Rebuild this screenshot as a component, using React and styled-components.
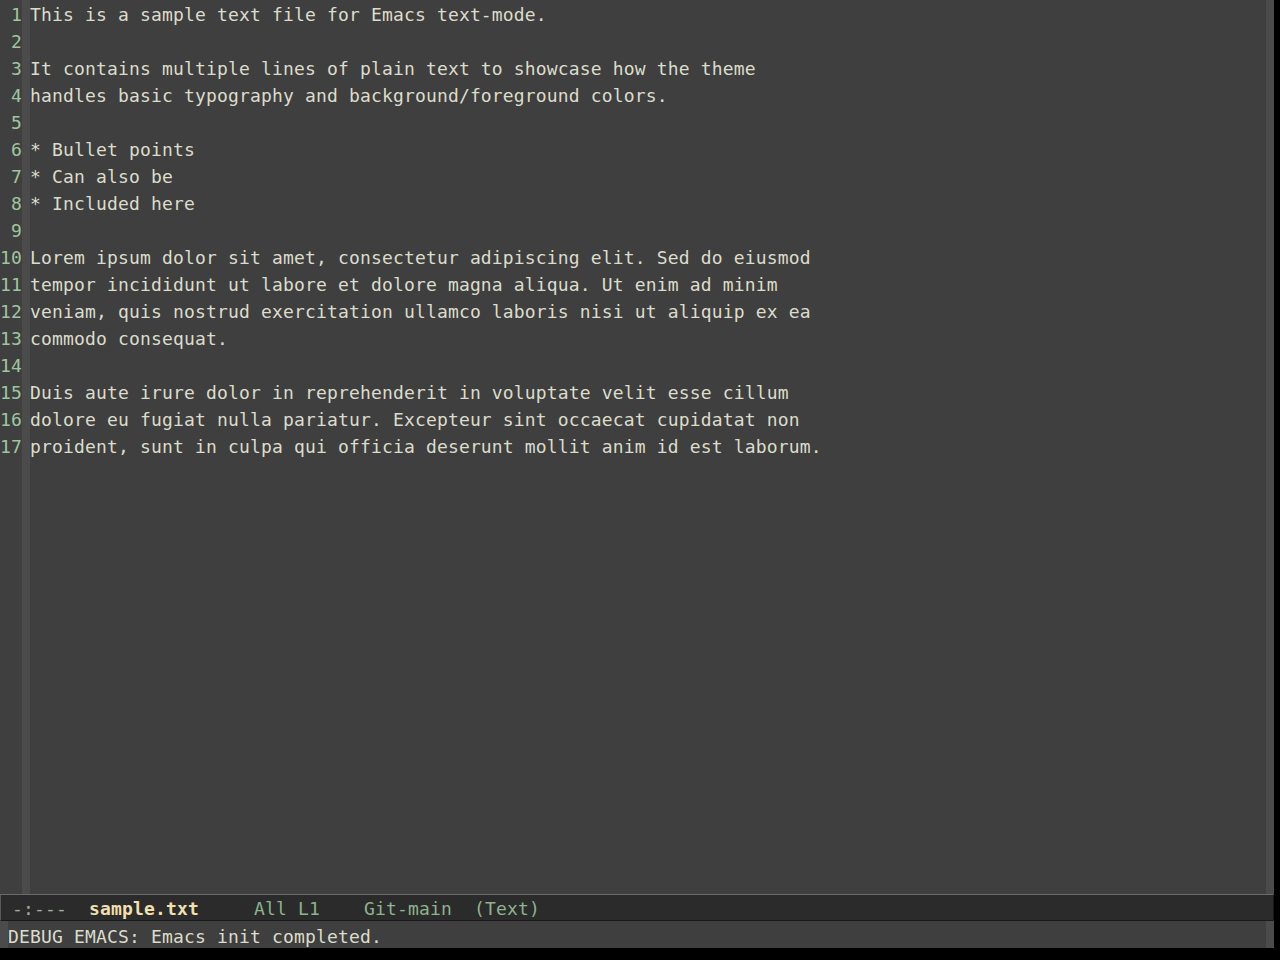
import React from "react";
import styled, { createGlobalStyle } from "styled-components";

const Global = createGlobalStyle`
  html, body { margin: 0; padding: 0; background: #000; }
  body { font-family: "DejaVu Sans Mono", monospace; }
`;

const lines = [
  "This is a sample text file for Emacs text-mode.",
  "",
  "It contains multiple lines of plain text to showcase how the theme",
  "handles basic typography and background/foreground colors.",
  "",
  "* Bullet points",
  "* Can also be",
  "* Included here",
  "",
  "Lorem ipsum dolor sit amet, consectetur adipiscing elit. Sed do eiusmod",
  "tempor incididunt ut labore et dolore magna aliqua. Ut enim ad minim",
  "veniam, quis nostrud exercitation ullamco laboris nisi ut aliquip ex ea",
  "commodo consequat.",
  "",
  "Duis aute irure dolor in reprehenderit in voluptate velit esse cillum",
  "dolore eu fugiat nulla pariatur. Excepteur sint occaecat cupidatat non",
  "proident, sunt in culpa qui officia deserunt mollit anim id est laborum.",
];

const Frame = styled.div`
  width: 1280px;
  height: 960px;
  display: flex;
  background: #000;
  overflow: hidden;
  font-family: "DejaVu Sans Mono", monospace;
  font-size: 18px;
  letter-spacing: 0.16px;
  line-height: 27px;
`;

const Main = styled.div`
  width: 1274px;
  display: flex;
  flex-direction: column;
`;

const Window = styled.div`
  height: 894px;
  display: grid;
  grid-template-columns: 22px 8px 1fr 8px;
  background: #3f3f3f;
`;

const Gutter = styled.div`
  display: flex;
  flex-direction: column;
  align-items: flex-end;
  color: #9fc59f;
`;

const Fringe = styled.div`
  background: #4b4b4b;
`;

const TextArea = styled.div`
  display: flex;
  flex-direction: column;
  color: #dcdccc;
  white-space: pre;
`;

const Row = styled.div`
  height: 27px;
  box-sizing: border-box;
  padding-top: 1px;
`;

const ModeLine = styled.div`
  height: 27px;
  box-sizing: border-box;
  background: #2b2b2b;
  border-top: 1px solid #6a6a6a;
  border-left: 1px solid #5a5a5a;
  border-bottom: 1px solid #1a1a1a;
  border-right: 1px solid #1a1a1a;
  padding-top: 2px;
  display: flex;
  align-items: center;
  white-space: pre;
  color: #8fb28f;
`;

const Seg = styled.span`
  color: ${(p) => p.$color || "#8fb28f"};
  font-weight: ${(p) => (p.$bold ? 700 : 400)};
`;

const Echo = styled.div`
  height: 27px;
  display: grid;
  grid-template-columns: 8px 1fr 8px;
  background: #3f3f3f;
  color: #dcdccc;
  white-space: pre;
`;

const EchoText = styled.div`
  padding-top: 2px;
`;

const Black = styled.div`
  flex: 1;
  background: #000;
`;

export default function App() {
  return (
    <>
      <Global />
      <Frame>
        <Main>
          <Window>
            <Gutter>
              {lines.map((_, i) => (
                <Row key={i}>{i + 1}</Row>
              ))}
            </Gutter>
            <Fringe />
            <TextArea>
              {lines.map((l, i) => (
                <Row key={i}>{l}</Row>
              ))}
            </TextArea>
            <Fringe />
          </Window>
          <ModeLine>
            <Seg $color="#a0aca0">{" -:---  "}</Seg>
            <Seg $color="#f0dfaf" $bold>
              sample.txt
            </Seg>
            <Seg>{"     All L1    Git-main  (Text)"}</Seg>
          </ModeLine>
          <Echo>
            <Fringe />
            <EchoText>DEBUG EMACS: Emacs init completed.</EchoText>
            <Fringe />
          </Echo>
          <Black />
        </Main>
      </Frame>
    </>
  );
}
